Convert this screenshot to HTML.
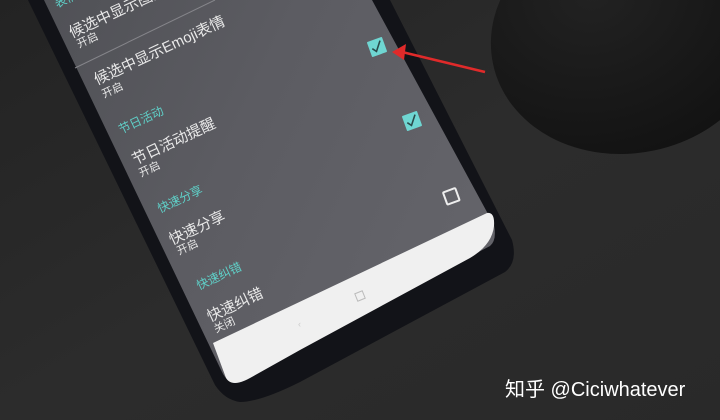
<!DOCTYPE html><html><head><meta charset="utf-8"><style>
html,body{margin:0;padding:0;width:720px;height:420px;overflow:hidden;background:#2a2a2a}
svg text{font-family:"Liberation Sans","Noto Sans CJK SC",sans-serif}
</style></head><body>
<svg width="720" height="420" viewBox="0 0 720 420" xmlns="http://www.w3.org/2000/svg">
<defs>
<linearGradient id="bg" x1="0" y1="0" x2="1" y2="1"><stop offset="0" stop-color="#232323"/><stop offset="0.5" stop-color="#2c2c2c"/><stop offset="1" stop-color="#292929"/></linearGradient>
<linearGradient id="scr" x1="0" y1="0" x2="1" y2="0.4"><stop offset="0" stop-color="#505156"/><stop offset="0.5" stop-color="#5c5c62"/><stop offset="1" stop-color="#636369"/></linearGradient>
<radialGradient id="mouse" cx="0.4" cy="0.3" r="0.75"><stop offset="0" stop-color="#222"/><stop offset="1" stop-color="#121212"/></radialGradient>
</defs>
<rect width="720" height="420" fill="url(#bg)"/>
<ellipse cx="630" cy="35" rx="140" ry="118" transform="rotate(-12 630 35)" fill="url(#mouse)"/>
<!-- phone body -->
<path d="M28,0 L390,0 L512,240 Q518,262 505,272 L300,382 Q260,402 240,402 Q225,400 215,385 Z" fill="#121318"/>
<!-- screen -->
<path d="M44,0 L372,0 L494,225 Q497,240 490,246 L300,346 Q255,370 240,380 Q228,385 222,372 Z" fill="url(#scr)"/>
<!-- white nav bar -->
<path d="M213,343 L487,213 Q495,212 494,226 Q492,245 470,258 L300,350 L250,378 Q232,388 226,378 Z" fill="#f0f0f0"/>
<rect x="356" y="292" width="8" height="8" fill="none" stroke="#bbb" stroke-width="1" transform="rotate(-22 360 296)"/>
<text x="298" y="327" font-size="9" fill="#ccc">‹</text>
<line x1="75" y1="68" x2="215" y2="0" stroke="#85858a" stroke-width="1"/>
<g fill="#e8e8e8" font-size="15">
<text transform="translate(72,38) rotate(-25)">候选中显示图片</text>
<text transform="translate(79,48) rotate(-25)" font-size="11">开启</text>
<text transform="translate(97,85) rotate(-25)">候选中显示Emoji表情</text>
<text transform="translate(104,98) rotate(-25)" font-size="11">开启</text>
<text transform="translate(135,165) rotate(-25)">节日活动提醒</text>
<text transform="translate(141,177) rotate(-25)" font-size="11">开启</text>
<text transform="translate(172,245) rotate(-25)">快速分享</text>
<text transform="translate(179,255) rotate(-25)" font-size="11">开启</text>
<text transform="translate(210,322) rotate(-25)">快速纠错</text>
<text transform="translate(216,333) rotate(-25)" font-size="11">关闭</text>
</g>
<g fill="#5fd0c8" font-size="12">
<text transform="translate(57,8) rotate(-25)">表情</text>
<text transform="translate(121,134) rotate(-25)">节日活动</text>
<text transform="translate(160,213) rotate(-25)">快速分享</text>
<text transform="translate(199,290) rotate(-25)">快速纠错</text>
</g>
<g transform="rotate(-20 377 47)"><rect x="369" y="39" width="16" height="16" rx="1" fill="#6fd6d2"/><path d="M372,47 l3,4 l7,-9" stroke="#2a4a4a" stroke-width="1.6" fill="none"/></g>
<g transform="rotate(-20 412 121)"><rect x="404" y="113" width="16" height="16" rx="1" fill="#6fd6d2"/><path d="M407,121 l3,4 l7,-9" stroke="#2a4a4a" stroke-width="1.6" fill="none"/></g>
<rect x="445" y="190" width="13" height="13" rx="1" fill="none" stroke="#eee" stroke-width="2" transform="rotate(-20 451 197)"/>
<path d="M485,72 L402,52" stroke="#e02a2a" stroke-width="2.5"/>
<path d="M392,52 L406,44 L404,60 Z" fill="#e02a2a"/>
<text x="505" y="396" font-size="20" fill="#fff">知乎 @Ciciwhatever</text>
</svg>
</body></html>
